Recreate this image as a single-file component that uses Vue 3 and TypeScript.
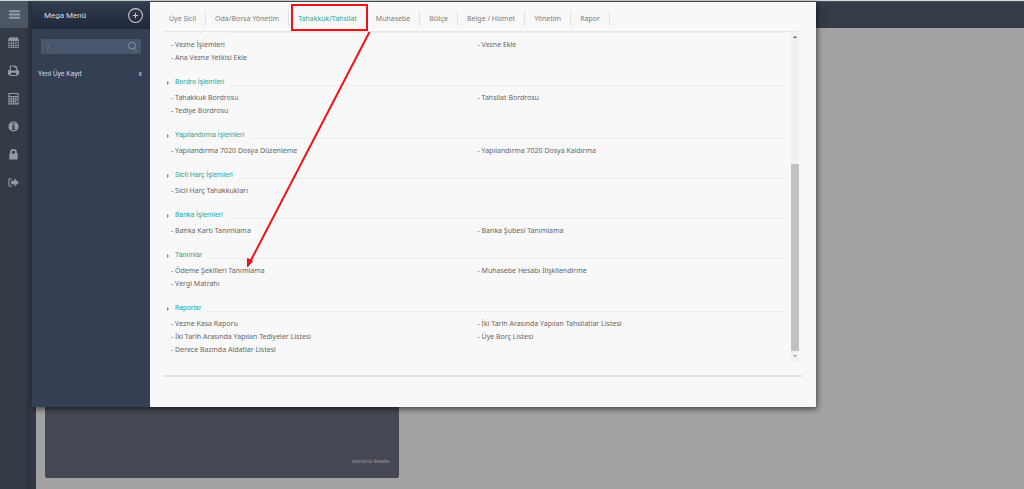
<script setup lang="ts">
import { ref } from 'vue'

interface Section {
  title: string
  links: string[]
}

const tabs: string[] = [
  'Üye Sicil',
  'Oda/Borsa Yönetim',
  'Tahakkuk/Tahsilat',
  'Muhasebe',
  'Bütçe',
  'Belge / Hizmet',
  'Yönetim',
  'Rapor',
]
const active = ref('Tahakkuk/Tahsilat')
const query = ref('')

const sections: Section[] = [
  { title: 'Vezne İşlemleri', links: ['Vezne İşlemleri', 'Vezne Ekle', 'Ana Vezne Yetkisi Ekle'] },
  { title: 'Bordro İşlemleri', links: ['Tahakkuk Bordrosu', 'Tahsilat Bordrosu', 'Tediye Bordrosu'] },
  {
    title: 'Yapılandırma İşlemleri',
    links: ['Yapılandırma 7020 Dosya Düzenleme', 'Yapılandırma 7020 Dosya Kaldırma'],
  },
  { title: 'Sicil Harç İşlemleri', links: ['Sicil Harç Tahakkukları'] },
  { title: 'Banka İşlemleri', links: ['Banka Kartı Tanımlama', 'Banka Şubesi Tanımlama'] },
  {
    title: 'Tanımlar',
    links: ['Ödeme Şekilleri Tanımlama', 'Muhasebe Hesabı İlişkilendirme', 'Vergi Matrahı'],
  },
  {
    title: 'Raporlar',
    links: [
      'Vezne Kasa Raporu',
      'İki Tarih Arasında Yapılan Tahsilatlar Listesi',
      'İki Tarih Arasında Yapılan Tediyeler Listesi',
      'Üye Borç Listesi',
      'Derece Bazında Aidatlar Listesi',
    ],
  },
]
</script>

<template>
  <div class="page">
    <header class="topbar"></header>
    <div class="body">
      <nav class="rail" aria-label="Kısayollar">
        <button class="rail-btn current" type="button" aria-label="Menü">
          <svg viewBox="0 0 14 14"><path d="M1 2.500h12v2H1zM1 6h12v2H1zM1 9.500h12v2H1z" /></svg>
        </button>
        <button class="rail-btn" type="button" aria-label="Takvim">
          <svg viewBox="0 0 14 14">
            <path
              fill-rule="evenodd"
              d="M1.500 2.500h1.500V1h2v1.500h1V1h2v1.500h1V1h2v1.500h1.500v10.500h-11zM2.300 5.500v1.700h2V5.500zM5 5.500v1.700h1.800V5.500zM7.500 5.500v1.700h1.800V5.500zM10 5.500v1.700h1.800V5.500zM2.300 8v1.700h2V8zM5 8v1.700h1.800V8zM7.500 8v1.700h1.800V8zM10 8v1.700h1.800V8zM2.300 10.500v1.700h2v-1.700zM5 10.500v1.700h1.800v-1.700zM7.500 10.500v1.700h1.800v-1.700zM10 10.500v1.700h1.800v-1.700z"
            />
          </svg>
        </button>
        <button class="rail-btn" type="button" aria-label="Yazdır">
          <svg viewBox="0 0 14 14">
            <path
              fill-rule="evenodd"
              d="M3 1.500h6.200L11 3.300V6.500h.5a1.500 1.500 0 0 1 1.500 1.500v3.500h-2v1.500H3v-1.500H1V8a1.500 1.500 0 0 1 1.500-1.500H3zM4.200 2.700v4.300h5.600V4.300H8.200V2.700zM4.200 9.500v2.300h5.600V9.500z"
            />
          </svg>
        </button>
        <button class="rail-btn" type="button" aria-label="Hesap">
          <svg viewBox="0 0 14 14">
            <path
              fill-rule="evenodd"
              d="M1.500 1h11v12.500h-11zM2.700 2.200v2h8.600v-2zM2.600 5.500v1.500h1.500V5.500zM5 5.500v1.500h1.500V5.500zM7.500 5.500v1.500H9V5.500zM10 5.500v1.500h1.500V5.500zM2.600 8v1.500h1.500V8zM5 8v1.500h1.500V8zM7.500 8v1.500H9V8zM10 8v4h1.500V8zM2.600 10.500v1.500h1.500v-1.500zM5 10.500v1.500h1.500v-1.500zM7.500 10.500v1.500H9v-1.500z"
            />
          </svg>
        </button>
        <button class="rail-btn" type="button" aria-label="Bilgi">
          <svg viewBox="0 0 14 14">
            <path
              fill-rule="evenodd"
              d="M7 1.500a5.500 5.500 0 1 1 0 11a5.500 5.500 0 0 1 0-11zM6 3v1.700h2V3zM5.200 5.700v1h.8v3h-.8v1h3.600v-1H8v-4z"
            />
          </svg>
        </button>
        <button class="rail-btn" type="button" aria-label="Kilit">
          <svg viewBox="0 0 14 14">
            <path
              fill-rule="evenodd"
              d="M2.500 6h.8V4.800a3.700 3.700 0 0 1 7.400 0V6h.8v6.500h-9zM5.200 6h3.600V4.800a1.800 1.800 0 0 0-3.600 0z"
            />
          </svg>
        </button>
        <button class="rail-btn" type="button" aria-label="Çıkış">
          <svg viewBox="0 0 14 14">
            <path d="M5 2.500v1.200H2.700v6.600H5v1.200H3A1.500 1.500 0 0 1 1.500 10V4A1.500 1.500 0 0 1 3 2.500zM8 2.500l4.700 4.500L8 11.500V9H4.500V5H8z" />
          </svg>
        </button>
      </nav>
      <main class="content">
        <section class="card">
          <a class="all" href="#">tümünü listele</a>
        </section>
      </main>
    </div>

    <div class="mega">
      <aside class="side">
        <div class="side-head">
          <h1>Mega Menü</h1>
          <button class="add" type="button" aria-label="Ekle">
            <svg viewBox="0 0 16 16">
              <circle cx="8" cy="8" r="6.500" />
              <path d="M8 5.500v5M5.500 8h5" />
            </svg>
          </button>
        </div>
        <label class="search">
          <input v-model="query" type="text" aria-label="Menüde ara" placeholder="|" />
          <svg viewBox="0 0 12 12">
            <circle cx="5.500" cy="5" r="3.700" />
            <path d="M8 8l2.500 3" />
          </svg>
        </label>
        <div class="recent">
          <a href="#">Yeni Üye Kayıt</a>
          <button type="button" aria-label="Kaldır">x</button>
        </div>
      </aside>

      <div class="panel">
        <nav class="tabs">
          <button
            v-for="tab in tabs"
            :key="tab"
            type="button"
            :class="{ on: tab === active }"
            @click="active = tab"
          >
            {{ tab }}
          </button>
        </nav>
        <div class="scroller">
          <div class="list">
            <section v-for="s in sections" :key="s.title" class="group">
              <h2><i></i><span>{{ s.title }}</span></h2>
              <ul>
                <li v-for="l in s.links" :key="l">
                  <a href="#">- {{ l }}</a>
                </li>
              </ul>
            </section>
          </div>
          <div class="track">
            <span class="up"></span>
            <span class="thumb"></span>
            <span class="down"></span>
          </div>
        </div>
      </div>
    </div>

    <svg class="note" width="400" height="280" viewBox="0 0 400 280">
      <rect x="292" y="5" width="75" height="25" />
      <path d="M369.500 32L250 262" />
      <path class="tip" d="M247.500 267L247.500 258.500L252.500 261z" />
    </svg>
  </div>
</template>

<style>
body {
  margin: 0;
}
</style>

<style scoped>
.page {
  position: relative;
  display: flex;
  flex-direction: column;
  min-height: 100vh;
  overflow: hidden;
  background: #a3a3a3;
  font-family: 'Noto Sans', 'Open Sans', sans-serif;
  font-size: 7px;
  line-height: 13px;
  color: #666;
}
button {
  margin: 0;
  padding: 0;
  border: 0;
  background: none;
  font: inherit;
  color: inherit;
  cursor: pointer;
}
a {
  color: inherit;
  text-decoration: none;
}
.topbar {
  height: 25px;
  border-top: 1px solid #cfd9da;
  background: #333c47;
  box-shadow: inset 0 1px #4c5455;
  border-bottom: 2px solid #333c47;
}
.body {
  flex: 1;
  display: flex;
}
.rail {
  box-sizing: border-box;
  width: 36px;
  margin-top: -27px;
  padding-right: 8px;
  background: linear-gradient(90deg, #343b46 26px, #2d333e 28px, #323a46 32px);
}
.rail-btn {
  display: flex;
  align-items: center;
  justify-content: center;
  width: 27px;
  height: 28px;
}
.rail-btn.current {
  width: 28px;
  height: 27px;
  background: #4c5764;
}
.rail-btn svg {
  width: 13px;
  height: 13px;
  fill: #929aa5;
}
.content {
  flex: 1;
  display: flex;
  align-items: flex-end;
  padding: 0 9px 11px;
}
.card {
  display: flex;
  justify-content: flex-end;
  align-items: flex-end;
  box-sizing: border-box;
  width: 354px;
  max-width: 100%;
  height: 200px;
  padding: 10px;
  border-radius: 2px;
  background: #454852;
}
.all {
  color: #9a9ca2;
  font-family: 'Liberation Sans', Arial, sans-serif;
  font-size: 6px;
}
.mega {
  position: absolute;
  top: 2px;
  left: 32px;
  display: flex;
  width: 784px;
  max-width: calc(100% - 32px);
  box-shadow: 1px 2px 6px rgba(0, 0, 0, 0.6);
}
.side {
  width: 118px;
  background: #343f54;
  color: #d5d9e0;
  font-family: Roboto, 'Liberation Sans', sans-serif;
}
.side-head {
  display: flex;
  align-items: center;
  justify-content: space-between;
  height: 27px;
  padding: 0 6px 0 12px;
  background: linear-gradient(#333c50, #20273a);
}
h1 {
  margin: 0;
  font-size: 8px;
  font-weight: 400;
}
.add {
  display: flex;
}
.add svg {
  width: 17px;
  height: 17px;
  fill: none;
  stroke: #c5cad4;
  stroke-width: 1;
}
.search {
  display: flex;
  align-items: center;
  height: 15px;
  margin: 10px 9px 0;
  padding: 0 3px 0 6px;
  background: #4a566b;
}
.search input {
  flex: 1;
  min-width: 0;
  padding: 0;
  border: 0;
  outline: 0;
  background: none;
  color: #d5d9e0;
  font: 8px Roboto, sans-serif;
}
.search input::placeholder {
  color: #7d889a;
}
.search svg {
  width: 11px;
  height: 11px;
  fill: none;
  stroke: #8f9aab;
  stroke-width: 1;
}
.recent {
  display: flex;
  justify-content: space-between;
  margin: 14px 8px 0 6px;
}
.panel {
  flex: 1;
  min-width: 0;
  padding: 0 14px 30px 13px;
  background: #f8f8f8;
}
.tabs {
  display: flex;
  align-items: center;
  box-sizing: border-box;
  height: 30px;
  margin-right: 3px;
  padding-top: 4px;
  border-bottom: 1px solid #e6e6e6;
}
.tabs button {
  padding: 1px 9px;
  border-right: 1px solid #e2e2e2;
  color: #7c7c7c;
  white-space: nowrap;
}
.tabs button:first-child {
  padding-left: 6px;
}
.tabs .on {
  color: #2fa597;
}
.scroller {
  display: flex;
  justify-content: space-between;
  height: 329px;
  padding-bottom: 14px;
  border-bottom: 2px solid #e2e2e2;
}
.list {
  flex: 1;
  overflow: hidden;
  padding-left: 4px;
}
.group:first-child {
  margin-top: -10px;
}
.group {
  margin-bottom: 11px;
}
h2 {
  display: flex;
  align-items: center;
  margin: 0 0 2px;
  padding-top: 1px;
  color: #2fa597;
  font-family: Roboto, 'Liberation Sans', sans-serif;
  font-size: 7px;
  font-weight: 400;
}
h2 i {
  width: 0;
  margin-right: 6px;
  border-left: 2px solid #2fa597;
  border-top: 2px solid transparent;
  border-bottom: 2px solid transparent;
}
h2::after {
  content: '';
  flex: 1;
  height: 1px;
  margin: 5px 0 0 6px;
  background: #ebebeb;
}
ul {
  display: grid;
  grid-template-columns: 1fr 1fr;
  margin: 0;
  padding: 0 0 0 4px;
  list-style: none;
}
li {
  height: 13px;
}
.track {
  display: flex;
  flex-direction: column;
  align-items: center;
  width: 8px;
  margin: 0 3px 0 7px;
  background: #f0f0f0;
}
.up,
.down {
  width: 0;
  border: 2px solid transparent;
}
.up {
  margin: 2px 0 auto;
  border-bottom-color: #555;
}
.down {
  margin: 4px 0 2px;
  border-top-color: #999;
}
.thumb {
  width: 8px;
  height: 187px;
  background: #c1c1c1;
}
.note {
  position: absolute;
  top: 0;
  left: 0;
  fill: none;
  stroke: #f01018;
  stroke-width: 2;
  pointer-events: none;
}
.note .tip {
  fill: #f01018;
  stroke-width: 1;
}
</style>
